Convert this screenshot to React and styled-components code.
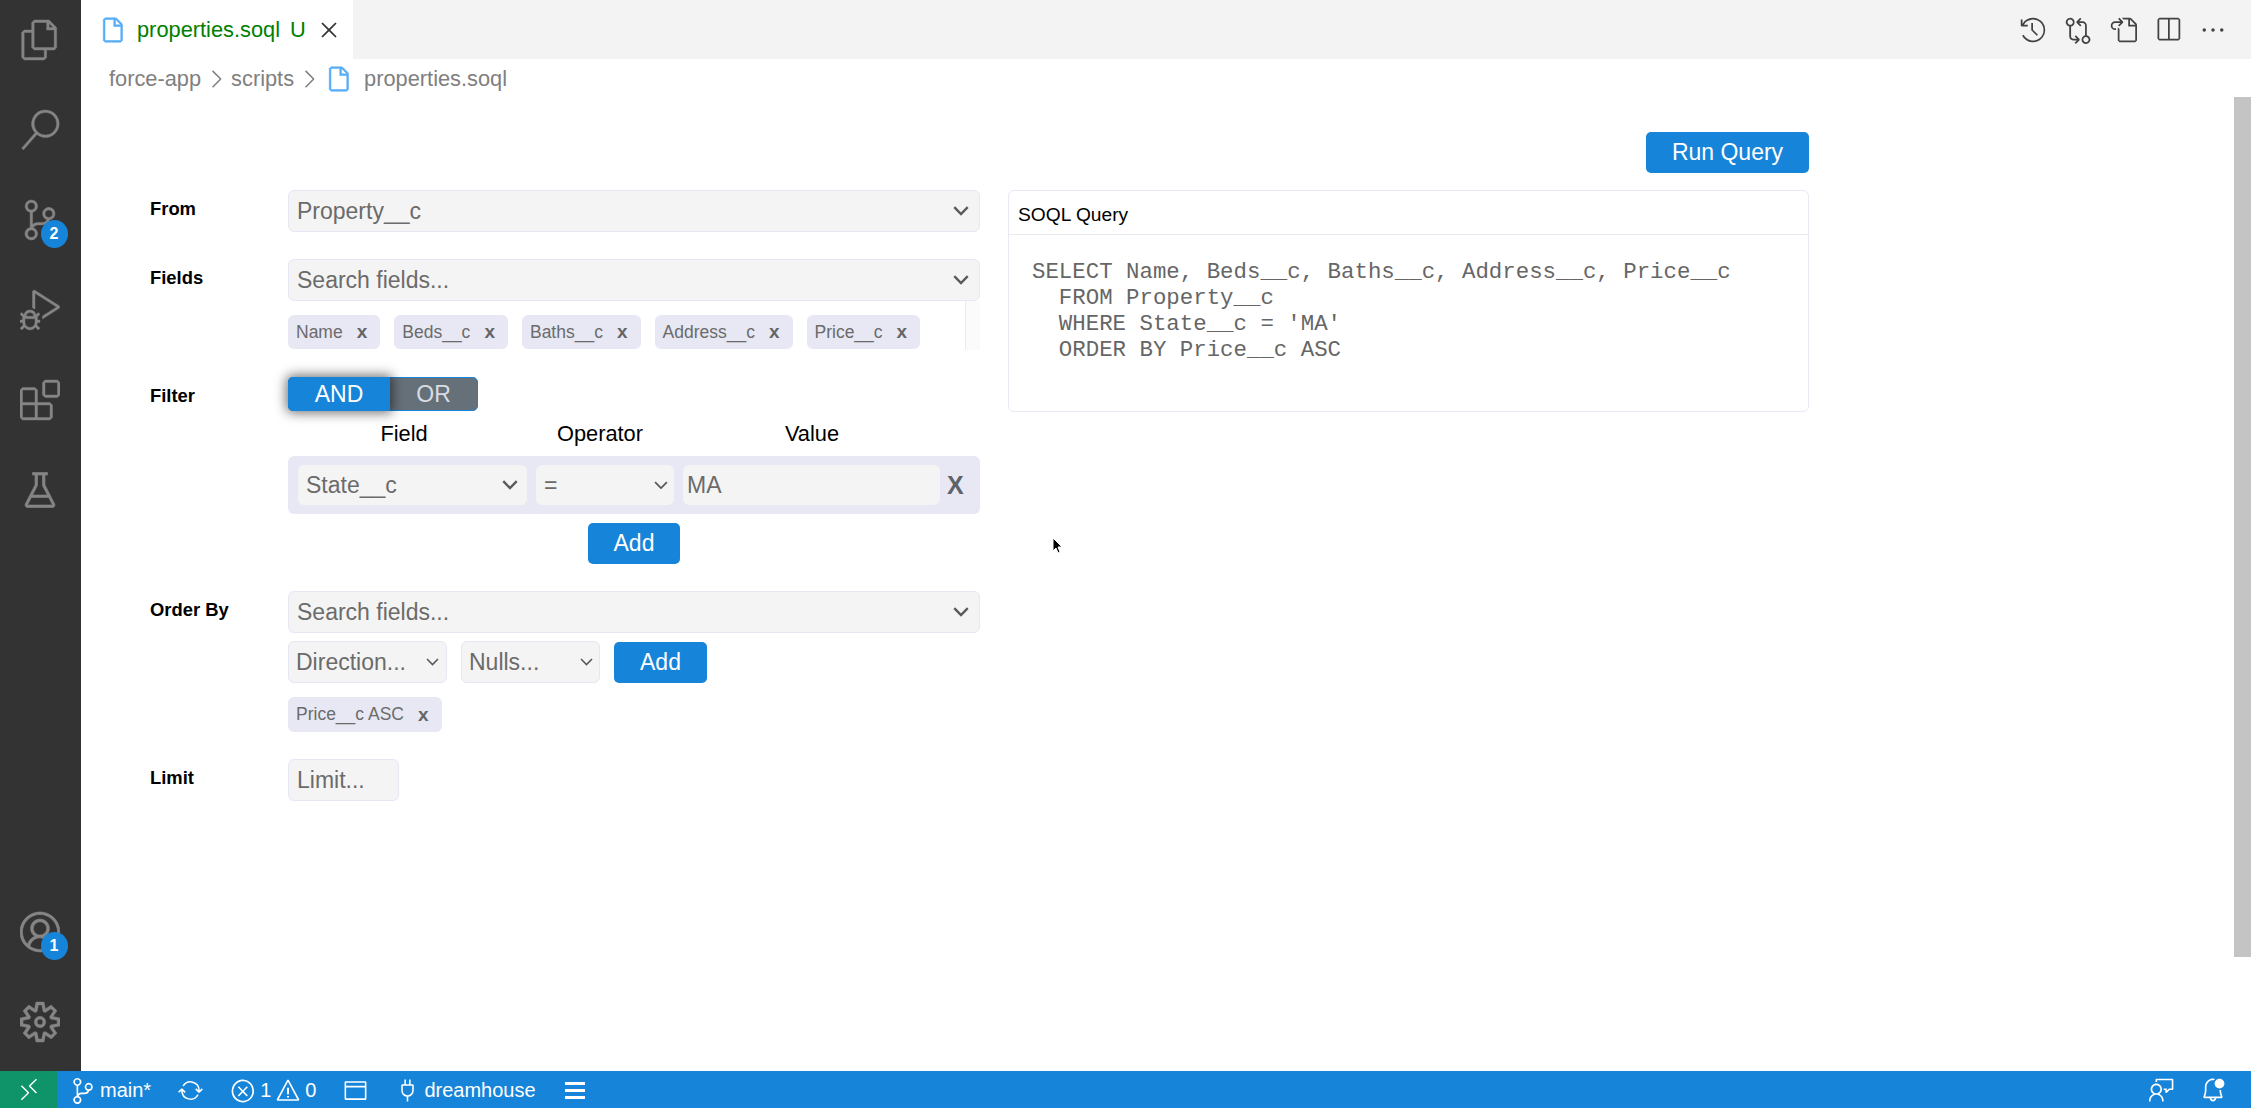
import React from 'react';
import styled, { createGlobalStyle } from 'styled-components';
import {
	VscAccount,
	VscBeaker,
	VscBellDot,
	VscChevronRight,
	VscClose,
	VscDebugAlt,
	VscEllipsis,
	VscError,
	VscExtensions,
	VscFeedback,
	VscFile,
	VscFiles,
	VscGitCompare,
	VscGoToFile,
	VscHistory,
	VscPlug,
	VscRemote,
	VscSearch,
	VscSettingsGear,
	VscSourceControl,
	VscSplitHorizontal,
	VscSync,
	VscWarning,
	VscWindow,
} from 'react-icons/vsc';

const BLUE = '#1684d9';
const LAVENDER = '#e7e8f4';
const FIELD_BG = '#f4f4f4';
const FIELD_TEXT = '#6b6b6b';

const GlobalStyle = createGlobalStyle`
	html, body {
		margin: 0;
		height: 100%;
		overflow: hidden;
		background: #fff;
		font-family: 'Liberation Sans', Arial, sans-serif;
	}
	* {
		box-sizing: border-box;
	}
`;

const Shell = styled.div`
	display: flex;
	flex-direction: column;
	height: 1108px;
	width: 2251px;
`;
const Workbench = styled.div`
	flex: 1;
	display: flex;
	min-height: 0;
`;

/* activity bar */
const ActivityBar = styled.nav`
	width: 81px;
	background: #333333;
	color: #858585;
	display: flex;
	flex-direction: column;
	justify-content: space-between;
	align-items: center;
	padding: 20px 2px 29px 0;
`;
const ActivityGroup = styled.div`
	display: flex;
	flex-direction: column;
	gap: 50px;
`;
const ActivityIcon = styled.div`
	position: relative;
	width: 40px;
	height: 40px;
	display: flex;
	align-items: center;
	justify-content: center;
	svg {
		stroke-width: 0.25;
	}
`;
const Badge = styled.span`
	position: absolute;
	left: 21px;
	top: 20px;
	width: 27px;
	height: 28px;
	border-radius: 50%;
	background: ${BLUE};
	color: #fff;
	font-size: 16px;
	font-weight: 700;
	display: flex;
	align-items: center;
	justify-content: center;
`;

/* editor */
const Editor = styled.main`
	flex: 1;
	position: relative;
	display: flex;
	flex-direction: column;
	min-width: 0;
`;
const TabBar = styled.div`
	height: 59px;
	background: #f3f3f3;
	display: flex;
	justify-content: space-between;
`;
const Tab = styled.div`
	width: 272px;
	background: #fff;
	display: flex;
	align-items: center;
	padding-left: 17px;
	font-size: 21.8px;
	color: #008000;
`;
const TabName = styled.span`
	margin-left: 11px;
`;
const TabStatus = styled.span`
	margin-left: 10px;
`;
const TabClose = styled.span`
	margin-left: 9px;
	color: #333;
	display: flex;
`;
const FileIcon = styled(VscFile)`
	flex: none;
	color: #55adf7;
	stroke-width: 0.3;
`;
const TabActions = styled.div`
	display: flex;
	align-items: center;
	gap: 17px;
	padding-right: 24px;
	color: #424242;
`;
const Breadcrumb = styled.div`
	height: 40px;
	padding-left: 28px;
	display: flex;
	align-items: center;
	font-size: 21.8px;
	color: #808080;
`;
const CrumbArrow = styled(VscChevronRight)`
	margin: 0 1px;
`;
const CrumbName = styled.span`
	margin-left: 12px;
`;
const Scrollbar = styled.div`
	position: absolute;
	right: 0;
	top: 97px;
	width: 17px;
	height: 860px;
	background: #c4c4c4;
`;
const Pointer = styled.svg`
	position: absolute;
	left: 971px;
	top: 537px;
`;

/* query builder */
const Builder = styled.div`
	width: 1728px;
	padding: 33px 0 0 69px;
`;
const Toolbar = styled.div`
	display: flex;
	justify-content: flex-end;
	margin-bottom: 17px;
`;
const Columns = styled.div`
	display: flex;
	gap: 28px;
	align-items: flex-start;
`;
const Form = styled.div`
	width: 830px;
	flex: none;
	display: flex;
	flex-direction: column;
	gap: 27px;
`;
const FormRow = styled.div`
	display: grid;
	grid-template-columns: 138px 692px;
`;
const Label = styled.div`
	font-size: 18.4px;
	font-weight: 700;
	color: #000;
	line-height: 38px;
`;
const Stack = styled.div`
	display: flex;
	flex-direction: column;
	min-width: 0;
`;
const Field = styled.div`
	height: ${(p) => p.$height || 42}px;
	width: ${(p) => (p.$width ? `${p.$width}px` : '100%')};
	flex: none;
	background: ${FIELD_BG};
	border: ${(p) => (p.$flat ? 'none' : '1px solid #e6e7f2')};
	border-radius: 6px;
	color: ${FIELD_TEXT};
	font-size: 23px;
	padding: 0 ${(p) => p.$right ?? 10}px 0 ${(p) => p.$left ?? 8}px;
	display: flex;
	align-items: center;
	justify-content: space-between;
	white-space: nowrap;
`;
const ChevronSvg = styled.svg`
	flex: none;
	fill: none;
	stroke: #5a5a5a;
	stroke-width: ${(p) => p.$weight || 2.4};
`;
const PillTrack = styled.div`
	display: flex;
	height: 49px;
`;
const Pills = styled.div`
	display: flex;
	gap: 14px;
	padding-top: 14px;
`;
const Gutter = styled.div`
	margin-left: auto;
	width: 15px;
	background: #fbfbfb;
	border-left: 1px solid #ececec;
`;
const Pill = styled.div`
	height: ${(p) => p.$height || 34}px;
	background: ${LAVENDER};
	border-radius: 6px;
	color: ${FIELD_TEXT};
	font-size: 17.5px;
	padding: 0 13px 0 8px;
	display: flex;
	align-items: center;
	gap: 14px;
	width: fit-content;
`;
const PillClose = styled.span`
	font-size: 19px;
	font-weight: 700;
	color: #666;
`;
const Toggle = styled.div`
	display: flex;
	width: 190px;
	height: 34px;
	border-radius: 5px;
	border: 1px solid ${BLUE};
	background: #667079;
	font-size: 23px;
	color: #d8dde3;
`;
const ToggleOn = styled.div`
	width: 102px;
	margin: -1px 0 -1px -1px;
	border-radius: 5px 0 0 5px;
	background: ${BLUE};
	color: #fff;
	display: flex;
	align-items: center;
	justify-content: center;
	box-shadow: 0 0 12px 2px rgba(0, 0, 0, 0.55);
`;
const ToggleOff = styled.div`
	flex: 1;
	display: flex;
	align-items: center;
	justify-content: center;
`;
const ColumnHeads = styled.div`
	display: grid;
	grid-template-columns: 232px 160px 264px;
	height: 45px;
	align-items: center;
	text-align: center;
	font-size: 21.8px;
	color: #000;
`;
const FilterRow = styled.div`
	height: 58px;
	background: ${LAVENDER};
	border-radius: 6px;
	padding: 0 10px;
	display: flex;
	align-items: center;
	gap: 9px;
`;
const FilterRemove = styled.span`
	margin-left: -2px;
	font-size: 25px;
	font-weight: 700;
	color: #5f6368;
`;
const Button = styled.button`
	height: 41px;
	width: ${(p) => p.$width}px;
	flex: none;
	border: none;
	border-radius: 5px;
	background: ${BLUE};
	color: #fff;
	font-family: inherit;
	font-size: 23px;
	padding: 0;
`;
const CenterRow = styled.div`
	display: flex;
	justify-content: center;
	margin-top: 9px;
`;
const InlineRow = styled.div`
	display: flex;
	align-items: center;
	gap: 14px;
	margin: 8px 0 14px;
`;
const QueryCard = styled.section`
	width: 801px;
	height: 222px;
	flex: none;
	border: 1px solid #e8e9f3;
	border-radius: 6px;
`;
const QueryTitle = styled.div`
	height: 44px;
	border-bottom: 1px solid #e8e9f3;
	padding: 5px 0 0 9px;
	font-size: 19.2px;
	color: #000;
	display: flex;
	align-items: center;
`;
const QueryText = styled.pre`
	margin: 0;
	padding: 24px 0 0 23px;
	font-family: 'Liberation Mono', 'Courier New', monospace;
	font-size: 22.4px;
	line-height: 26px;
	color: #666;
`;

/* status bar */
const StatusBar = styled.footer`
	height: 37px;
	background: ${BLUE};
	color: #fff;
	font-size: 20px;
	display: flex;
	align-items: center;
`;
const RemoteBox = styled.div`
	width: 57px;
	height: 100%;
	background: #0e9468;
	display: flex;
	align-items: center;
	justify-content: center;
`;
const StatusLeft = styled.div`
	display: flex;
	align-items: center;
	gap: 27px;
	padding: 2px 0 0 13px;
`;
const StatusRight = styled.div`
	margin-left: auto;
	display: flex;
	align-items: center;
	gap: 25px;
	padding-right: 25px;
`;
const StatusItem = styled.div`
	display: flex;
	align-items: center;
	gap: ${(p) => p.$gap ?? 4}px;
`;
const Burger = styled.div`
	width: 20px;
	height: 17px;
	display: flex;
	flex-direction: column;
	justify-content: space-between;
	margin-left: 2px;
	span {
		height: 3px;
		background: #fff;
	}
`;

const selectedFields = ['Name', 'Beds__c', 'Baths__c', 'Address__c', 'Price__c'];
const query = `SELECT Name, Beds__c, Baths__c, Address__c, Price__c
  FROM Property__c
  WHERE State__c = 'MA'
  ORDER BY Price__c ASC`;

const Chevron = ({ width = 16, weight }) => (
	<ChevronSvg $weight={weight} width={width} height={width * 0.62} viewBox='0 0 16 10'>
		<path d='M1.2 1.2 8 8.2l6.8-7' />
	</ChevronSvg>
);

const FieldPill = ({ label }) => (
	<Pill>
		{label}
		<PillClose>x</PillClose>
	</Pill>
);

const App = () => {
	return (
		<Shell>
			<GlobalStyle />
			<Workbench>
				<ActivityBar>
					<ActivityGroup>
						<ActivityIcon><VscFiles size={46} /></ActivityIcon>
						<ActivityIcon><VscSearch size={44} /></ActivityIcon>
						<ActivityIcon>
							<VscSourceControl size={44} />
							<Badge>2</Badge>
						</ActivityIcon>
						<ActivityIcon><VscDebugAlt size={44} /></ActivityIcon>
						<ActivityIcon><VscExtensions size={44} /></ActivityIcon>
						<ActivityIcon><VscBeaker size={44} /></ActivityIcon>
					</ActivityGroup>
					<ActivityGroup>
						<ActivityIcon>
							<VscAccount size={44} />
							<Badge>1</Badge>
						</ActivityIcon>
						<ActivityIcon><VscSettingsGear size={44} /></ActivityIcon>
					</ActivityGroup>
				</ActivityBar>
				<Editor>
					<TabBar>
						<Tab>
							<FileIcon size={28} />
							<TabName>properties.soql</TabName>
							<TabStatus>U</TabStatus>
							<TabClose><VscClose size={28} /></TabClose>
						</Tab>
						<TabActions>
							<VscHistory size={28} />
							<VscGitCompare size={28} />
							<VscGoToFile size={28} />
							<VscSplitHorizontal size={28} />
							<VscEllipsis size={28} />
						</TabActions>
					</TabBar>
					<Breadcrumb>
						force-app
						<CrumbArrow size={28} />
						scripts
						<CrumbArrow size={28} />
						<FileIcon size={28} />
						<CrumbName>properties.soql</CrumbName>
					</Breadcrumb>
					<Builder>
						<Toolbar>
							<Button $width={163}>Run Query</Button>
						</Toolbar>
						<Columns>
							<Form>
								<FormRow>
									<Label>From</Label>
									<Field>Property__c<Chevron /></Field>
								</FormRow>
								<FormRow>
									<Label>Fields</Label>
									<Stack>
										<Field>Search fields...<Chevron /></Field>
										<PillTrack>
											<Pills>
												{selectedFields.map((name) => (
													<FieldPill key={name} label={name} />
												))}
											</Pills>
											<Gutter />
										</PillTrack>
									</Stack>
								</FormRow>
								<FormRow>
									<Label>Filter</Label>
									<Stack>
										<Toggle>
											<ToggleOn>AND</ToggleOn>
											<ToggleOff>OR</ToggleOff>
										</Toggle>
										<ColumnHeads>
											<span>Field</span>
											<span>Operator</span>
											<span>Value</span>
										</ColumnHeads>
										<FilterRow>
											<Field $flat $width={229} $height={40} $left={8} $right={9}>
												State__c<Chevron />
											</Field>
											<Field $flat $width={138} $height={40} $left={8} $right={6}>
												=<Chevron width={14} weight={2} />
											</Field>
											<Field $flat $width={257} $height={40} $left={4}>MA</Field>
											<FilterRemove>X</FilterRemove>
										</FilterRow>
										<CenterRow>
											<Button $width={92}>Add</Button>
										</CenterRow>
									</Stack>
								</FormRow>
								<FormRow>
									<Label>Order By</Label>
									<Stack>
										<Field>Search fields...<Chevron /></Field>
										<InlineRow>
											<Field $width={159} $left={7} $right={7}>Direction...<Chevron width={13} weight={2} /></Field>
											<Field $width={139} $left={7} $right={6}>Nulls...<Chevron width={13} weight={2} /></Field>
											<Button $width={93}>Add</Button>
										</InlineRow>
										<Pill $height={35}>
											Price__c ASC
											<PillClose>x</PillClose>
										</Pill>
									</Stack>
								</FormRow>
								<FormRow>
									<Label>Limit</Label>
									<Field $width={111}>Limit...</Field>
								</FormRow>
							</Form>
							<QueryCard>
								<QueryTitle>SOQL Query</QueryTitle>
								<QueryText>{query}</QueryText>
							</QueryCard>
						</Columns>
					</Builder>
					<Scrollbar />
					<Pointer width='12' height='18' viewBox='0 0 12 18'>
						<path d='M1 1v13l3-3 2 5 2-1-2-5h4z' fill='#000' stroke='#fff' strokeWidth='1' />
					</Pointer>
				</Editor>
			</Workbench>
			<StatusBar>
				<RemoteBox><VscRemote size={26} /></RemoteBox>
				<StatusLeft>
					<StatusItem>
						<VscSourceControl size={26} />
						main*
					</StatusItem>
					<StatusItem><VscSync size={25} /></StatusItem>
					<StatusItem $gap={4}>
						<VscError size={26} />1
						<VscWarning size={26} />0
					</StatusItem>
					<StatusItem><VscWindow size={25} /></StatusItem>
					<StatusItem>
						<VscPlug size={25} />
						dreamhouse
					</StatusItem>
					<StatusItem>
						<Burger><span /><span /><span /></Burger>
					</StatusItem>
				</StatusLeft>
				<StatusRight>
					<VscFeedback size={26} />
					<VscBellDot size={26} />
				</StatusRight>
			</StatusBar>
		</Shell>
	);
};

export default App;
